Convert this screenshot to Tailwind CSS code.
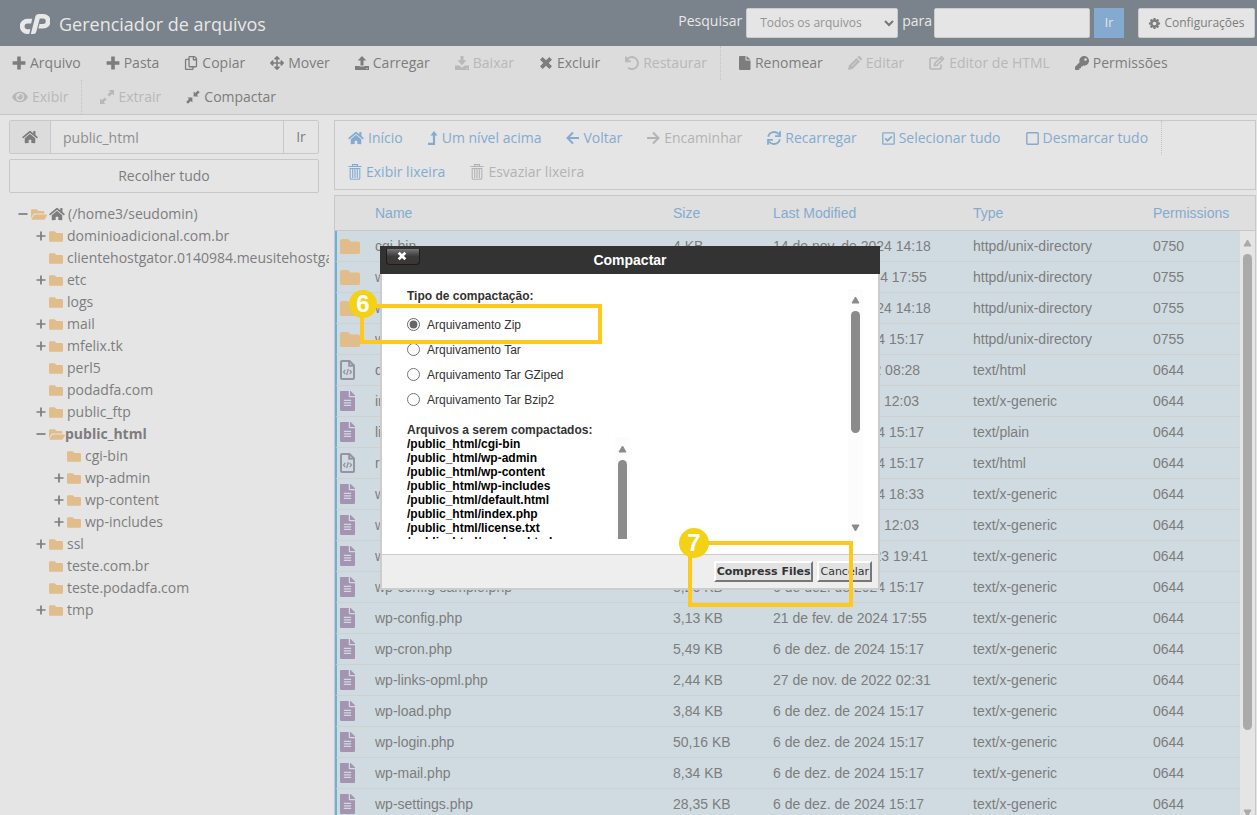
<!DOCTYPE html>
<html lang="pt-BR">
<head>
    <meta charset="UTF-8">
    <meta name="viewport" content="width=device-width, initial-scale=1.0">
    <title>Gerenciador de arquivos</title>
    <script src="https://cdn.jsdelivr.net/npm/@tailwindcss/browser@4"></script>
</head>
<body class="relative flex h-screen flex-col overflow-hidden bg-[#e5e5e5] font-['Open_Sans',sans-serif] text-sm text-[#7d7d7d]">

    <!-- Icon sprite -->
    <svg class="hidden" xmlns="http://www.w3.org/2000/svg">
        <symbol id="plus" viewBox="0 0 14 14"><path d="M5.2.6h3.6v4.6h4.6v3.6H8.800v4.600H5.200V8.800H.6V5.200h4.600z"/></symbol>
        <symbol id="copy" viewBox="0 0 448 512"><path d="M433.941 65.941l-51.882-51.882A48 48 0 0 0 348.118 0H176c-26.510 0-48 21.490-48 48v48H48c-26.510 0-48 21.490-48 48v320c0 26.510 21.490 48 48 48h224c26.510 0 48-21.490 48-48v-48h80c26.510 0 48-21.490 48-48V99.882a48 48 0 0 0-14.059-33.941zM266 464H54a6 6 0 0 1-6-6V150a6 6 0 0 1 6-6h74v224c0 26.510 21.490 48 48 48h96v42a6 6 0 0 1-6 6zm128-96H182a6 6 0 0 1-6-6V54a6 6 0 0 1 6-6h106v88c0 13.255 10.745 24 24 24h88v202a6 6 0 0 1-6 6zm6-256h-64V48h9.632c1.591 0 3.117.632 4.243 1.757l48.368 48.368a6 6 0 0 1 1.757 4.243V112z"/></symbol>
        <symbol id="move" viewBox="0 0 512 512"><path d="M352.201 425.775l-79.196 79.196c-9.373 9.373-24.568 9.373-33.941 0l-79.196-79.196c-15.119-15.119-4.411-40.971 16.971-40.970h51.162L228 284H127.196v51.162c0 21.382-25.851 32.090-40.971 16.971L7.029 272.937c-9.373-9.373-9.373-24.569 0-33.941L86.225 159.800c15.119-15.119 40.971-4.411 40.971 16.971V228H228V127.196h-51.230c-21.382 0-32.090-25.851-16.971-40.971l79.196-79.196c9.373-9.373 24.568-9.373 33.941 0l79.196 79.196c15.119 15.119 4.411 40.971-16.971 40.971h-51.162V228h100.804v-51.162c0-21.382 25.851-32.090 40.970-16.971l79.196 79.196c9.373 9.373 9.373 24.569 0 33.941L425.773 352.200c-15.119 15.119-40.971 4.411-40.970-16.971V284H284v100.804h51.230c21.382 0 32.090 25.851 16.971 40.971z"/></symbol>
        <symbol id="upload" viewBox="0 0 14 14"><path d="M7 0l4.300 4.600H8.500v4.900h-3V4.600H2.700zM0 10h4.600v.6h4.800V10H14v4H0zm11.300 2v1h1.200v-1z"/></symbol>
        <symbol id="download" viewBox="0 0 14 14"><path d="M5.500 0h3v4.300h2.900L7 9.200 2.600 4.300h2.900zM0 9.600h4.200L7 11.700l2.800-2.100H14V14H0zm11.300 2.400v1h1.200v-1z"/></symbol>
        <symbol id="times" viewBox="0 0 14 14"><path d="M3.700 1L7 4.300 10.300 1 13 3.700 9.700 7l3.300 3.300-2.700 2.700L7 9.700 3.700 13 1 10.300 4.300 7 1 3.700z"/></symbol>
        <symbol id="undo" viewBox="0 0 14 14"><path d="M1 .5v4.700h4.700M1.300 5A6 6 0 1 1 3 11.600" fill="none" stroke="currentColor" stroke-width="1.900"/></symbol>
        <symbol id="file" viewBox="0 0 12 14"><path d="M1 0h5.500v4.500h5V13a1 1 0 0 1-1 1H1a1 1 0 0 1-1-1V1a1 1 0 0 1 1-1zM7.500 0l4 3.600h-4z"/></symbol>
        <symbol id="pencil" viewBox="0 0 14 14"><path d="M.9 9.600l7.600-7.600 3.500 3.500-7.600 7.600L0 14zM9.400 1.100l.8-.8a1 1 0 0 1 1.500 0l2 2a1 1 0 0 1 0 1.500l-.8.8z"/><path d="M4 9.900l4.600-4.600" stroke="#dcdcdc" stroke-width=".8"/></symbol>
        <symbol id="edit" viewBox="0 0 16 14"><path d="M8.500 2H2.200A1.200 1.200 0 0 0 1 3.200v8.600A1.200 1.200 0 0 0 2.200 13h8.600a1.200 1.200 0 0 0 1.200-1.200V8.500M5.500 9.500l.4-2.400L12.600.8l1.900 1.900L8 9.200zM11 2.200l2 2" fill="none" stroke="currentColor" stroke-width="1.600"/></symbol>
        <symbol id="key" viewBox="0 0 512 512"><path d="M512 176.001C512 273.203 433.202 352 336 352c-11.220 0-22.190-1.062-32.827-3.069l-24.012 27.014A23.999 23.999 0 0 1 261.223 384H224v40c0 13.255-10.745 24-24 24h-40v40c0 13.255-10.745 24-24 24H24c-13.255 0-24-10.745-24-24v-78.059c0-6.365 2.529-12.470 7.029-16.971l161.802-161.802C163.108 213.814 160 195.271 160 176 160 78.798 238.797.001 335.999 0 433.488-.001 512 78.511 512 176.001zM336 128c0 26.510 21.490 48 48 48s48-21.490 48-48-21.490-48-48-48-48 21.490-48 48z"/></symbol>
        <symbol id="eye" viewBox="0 0 576 512"><path d="M572.520 241.400C518.290 135.590 410.930 64 288 64S57.680 135.640 3.480 241.410a32.350 32.350 0 0 0 0 29.190C57.710 376.410 165.070 448 288 448s230.320-71.640 284.520-177.410a32.350 32.350 0 0 0 0-29.190zM288 400a144 144 0 1 1 144-144 143.930 143.930 0 0 1-144 144zm0-240a95.310 95.310 0 0 0-25.180 3.790 47.850 47.850 0 0 1-66.900 66.900A95.780 95.780 0 1 0 288 160z"/></symbol>
        <symbol id="expand" viewBox="0 0 14 14"><path d="M8.500 0H14v5.500l-1.800-1.800-2.900 2.900-1.900-1.900 2.900-2.900zM5.500 14H0V8.500l1.800 1.800 2.900-2.900 1.900 1.900-2.900 2.900z"/></symbol>
        <symbol id="compress" viewBox="0 0 14 14"><path d="M7.600 1.500v4.900h4.900L11 4.900l2.700-2.700L11.900.4 9.200 3.100zM6.400 12.500V7.600H1.500L3 9.100.2 11.900 2 13.700 4.800 11z"/></symbol>
        <symbol id="home" viewBox="0 0 576 512"><path d="M280.370 148.260L96 300.110V464a16 16 0 0 0 16 16l112.060-.290a16 16 0 0 0 15.920-16V368a16 16 0 0 1 16-16h64a16 16 0 0 1 16 16v95.640a16 16 0 0 0 16 16.050L464 480a16 16 0 0 0 16-16V300L295.670 148.260a12.190 12.190 0 0 0-15.300 0zM571.600 251.470L488 182.560V44.050a12 12 0 0 0-12-12h-56a12 12 0 0 0-12 12v72.610L318.470 43a48 48 0 0 0-61 0L4.340 251.470a12 12 0 0 0-1.600 16.900l25.500 31A12 12 0 0 0 45.150 301l235.220-193.740a12.190 12.190 0 0 1 15.300 0L530.900 301a12 12 0 0 0 16.900-1.600l25.500-31a12 12 0 0 0-1.700-16.930z"/></symbol>
        <symbol id="level-up" viewBox="0 0 10 14"><path d="M0 12.800h6V4" fill="none" stroke="currentColor" stroke-width="2.200"/><path d="M6 0l3.600 4.600H2.400z"/></symbol>
        <symbol id="arrow-left" viewBox="0 0 13 14"><path d="M7 1.500L1.500 7 7 12.500M1.500 7H13" fill="none" stroke="currentColor" stroke-width="2"/></symbol>
        <symbol id="arrow-right" viewBox="0 0 13 14"><path d="M6 1.500L11.500 7 6 12.500M11.500 7H0" fill="none" stroke="currentColor" stroke-width="2"/></symbol>
        <symbol id="sync" viewBox="0 0 14 14"><path d="M1.200 5.800A6 6 0 0 1 12 3.600M13 .3v4.900H8.100M12.800 8.200A6 6 0 0 1 2 10.400M1 13.700V8.800h4.900" fill="none" stroke="currentColor" stroke-width="1.800"/></symbol>
        <symbol id="check-square" viewBox="0 0 13 13"><path d="M1.500.8h10a.7.7 0 0 1 .7.7v10a.7.7 0 0 1-.7.7h-10a.7.7 0 0 1-.7-.7v-10a.7.7 0 0 1 .7-.7z" fill="none" stroke="currentColor" stroke-width="1.300"/><path d="M3.200 6.400l2.300 2.300 4.400-4.400" fill="none" stroke="currentColor" stroke-width="1.700"/></symbol>
        <symbol id="square" viewBox="0 0 13 13"><path d="M1.500.8h10a.7.7 0 0 1 .7.7v10a.7.7 0 0 1-.7.7h-10a.7.7 0 0 1-.7-.7v-10a.7.7 0 0 1 .7-.7z" fill="none" stroke="currentColor" stroke-width="1.400"/></symbol>
        <symbol id="trash" viewBox="0 0 13 16"><path d="M0 2.500h13M4 2.500V.6h5v1.900M1.700 4.500v9.400q0 1.300 1.300 1.300h7q1.300 0 1.300-1.300V4.500zM4.200 5v9M6.500 5v9M8.800 5v9" fill="none" stroke="currentColor" stroke-width="1.100"/></symbol>
        <symbol id="cog" viewBox="0 0 1792 1792"><path d="M1152 896q0-106-75-181t-181-75-181 75-75 181 75 181 181 75 181-75 75-181zm512-109v222q0 12-8 23t-20 13l-185 28q-19 54-39 91 35 50 107 138 10 12 10 25t-9 23q-27 37-99 108t-94 71q-12 0-26-9l-138-108q-44 23-91 38-16 136-29 186-7 28-36 28h-222q-14 0-24.500-8.500t-11.500-21.500l-28-184q-49-16-90-37l-141 107q-10 9-25 9-14 0-25-11-126-114-165-168-7-10-7-23 0-12 8-23 15-21 51-66.500t54-70.500q-27-50-41-99l-183-27q-13-2-21-12.500t-8-23.500v-222q0-12 8-23t19-13l186-28q14-46 39-92-40-57-107-138-10-12-10-24 0-10 9-23 26-36 98.500-107.500t94.500-71.500q13 0 26 10l138 107q44-23 91-38 16-136 29-186 7-28 36-28h222q14 0 24.500 8.500t11.500 21.500l28 184q49 16 90 37l142-107q9-9 24-9 13 0 25 10 129 119 165 170 7 8 7 22 0 12-8 23-15 21-51 66.500t-54 70.500q26 50 41 98l183 28q13 2 21 12.500t8 23.500z"/></symbol>
        <symbol id="folder" viewBox="0 64 512 384"><path d="M464 128H272l-64-64H48C21.490 64 0 85.490 0 112v288c0 26.510 21.490 48 48 48h416c26.510 0 48-21.490 48-48V176c0-26.510-21.490-48-48-48z"/></symbol>
        <symbol id="folder-open" viewBox="0 64 576 384"><path d="M572.694 292.093L500.270 416.248A63.997 63.997 0 0 1 444.989 448H45.025c-18.523 0-30.064-20.093-20.731-36.093l72.424-124.155A64 64 0 0 1 152 256h399.964c18.523 0 30.064 20.093 20.730 36.093zM152 224h328v-48c0-26.510-21.490-48-48-48H272l-64-64H48C21.490 64 0 85.490 0 112v278.046l69.077-118.418C86.214 242.250 117.989 224 152 224z"/></symbol>
        <symbol id="file-text" viewBox="0 0 384 512"><path d="M224 136V0H24C10.700 0 0 10.700 0 24v464c0 13.300 10.700 24 24 24h336c13.300 0 24-10.700 24-24V160H248c-13.200 0-24-10.800-24-24zm64 236c0 6.600-5.400 12-12 12H108c-6.600 0-12-5.400-12-12v-8c0-6.600 5.400-12 12-12h168c6.600 0 12 5.400 12 12v8zm0-64c0 6.600-5.400 12-12 12H108c-6.600 0-12-5.400-12-12v-8c0-6.600 5.400-12 12-12h168c6.600 0 12 5.400 12 12v8zm0-72v8c0 6.600-5.400 12-12 12H108c-6.600 0-12-5.400-12-12v-8c0-6.600 5.400-12 12-12h168c6.600 0 12 5.400 12 12zm96-114.100v6.100H256V0h6.100c6.400 0 12.500 2.500 17 7l97.900 98c4.500 4.500 7 10.600 7 16.900z"/></symbol>
        <symbol id="file-code" viewBox="0 0 15 20"><path d="M2 1h7.500L14 5.500V18a1 1 0 0 1-1 1H2a1 1 0 0 1-1-1V2a1 1 0 0 1 1-1zM9.200 1v4.800H14" fill="none" stroke="currentColor" stroke-width="2"/><path d="M5.300 9.800L3.500 12l1.800 2.200M9.700 9.800l1.800 2.200-1.800 2.200M8.300 9l-1.600 6" fill="none" stroke="currentColor" stroke-width="1.300"/></symbol>
        <symbol id="toggle-plus" viewBox="0 0 10 10"><path d="M5 .5v9M.5 5h9" fill="none" stroke="currentColor" stroke-width="1.700"/></symbol>
        <symbol id="toggle-minus" viewBox="0 0 10 10"><path d="M.5 5h9" fill="none" stroke="currentColor" stroke-width="1.700"/></symbol>
        <symbol id="chevron" viewBox="0 0 10 7"><path d="M1 1l4 4 4-4" fill="none" stroke="currentColor" stroke-width="2"/></symbol>
        <symbol id="triangle" viewBox="0 0 9 8"><path d="M4.500 1L8 7H1z" stroke="currentColor" stroke-linejoin="round"/></symbol>
    </svg>

    <!-- Header -->
    <header class="flex h-[46px] shrink-0 items-center bg-[#7a828b] pr-[2px] pl-5 text-[#e8e8e8]">
        <svg class="mt-0.5 h-5 w-[30px]" viewBox="0 0 30 20" fill="currentColor" role="img" aria-label="cPanel">
            <path d="M12.300 4.800L11.100 9.400H7.500a2.900 2.900 0 0 0 0 5.900H10.400L9.200 19.900H7.300A7.550 7.550 0 0 1 7.300 4.800z"/>
            <path d="M10.800 19.900L15.300 2.800Q16.100 0 19 0H23.400A7.100 7.100 0 0 1 23.400 14.500H18.300L19.500 10H23a2.750 2.750 0 0 0 0-5.500H19.800L16.200 18Q15.600 19.900 13.600 19.900z"/>
        </svg>
        <h1 class="ml-[9px] pt-[2px] text-lg">Gerenciador de arquivos</h1>
        <form class="ml-auto flex items-center" onsubmit="return false">
            <label for="scope" class="-mt-1 mr-1 font-medium">Pesquisar</label>
            <div class="relative">
                <select id="scope" class="h-[30px] w-[152px] appearance-none rounded-xs border border-[#ccc] bg-[#e5e5e5] pl-[13px] text-xs text-[#949494]">
                    <option>Todos os arquivos</option>
                </select>
                <svg class="pointer-events-none absolute top-3 right-1 h-[7px] w-2.5 text-[#777]"><use href="#chevron"/></svg>
            </div>
            <label for="query" class="-mt-1 mr-0.5 ml-1 font-medium">para</label>
            <input id="query" type="text" class="h-[30px] w-[156px] rounded-xs border border-[#ccc] bg-[#e5e5e5] px-3">
            <button class="ml-1 h-[30px] w-[30px] bg-[#84abcf] text-xs">Ir</button>
            <button type="button" class="ml-3.5 flex h-[30px] w-[117px] items-center justify-center gap-[3px] rounded-xs border border-[#ccc] bg-[#e5e5e5] text-xs text-[#7d7d7d]"><svg class="size-[13px] fill-current"><use href="#cog"/></svg>Configurações</button>
        </form>
    </header>

    <!-- Main toolbar -->
    <nav class="flex shrink-0 flex-wrap border-b border-[#c6c6c6] bg-[#dcdcdc]" aria-label="Ferramentas">
        <button class="flex h-[34px] items-center gap-1 pr-[13px] pl-3"><svg class="size-3.5 fill-current"><use href="#plus"/></svg>Arquivo</button>
        <button class="flex h-[34px] items-center gap-1 pr-[13px] pl-3"><svg class="size-3.5 fill-current"><use href="#plus"/></svg>Pasta</button>
        <button class="flex h-[34px] items-center gap-1 pr-[13px] pl-3"><svg class="size-3.5 fill-current"><use href="#copy"/></svg>Copiar</button>
        <button class="flex h-[34px] items-center gap-1 pr-[13px] pl-3"><svg class="size-3.5 fill-current"><use href="#move"/></svg>Mover</button>
        <button class="flex h-[34px] items-center gap-1 pr-[13px] pl-3"><svg class="size-3.5 fill-current"><use href="#upload"/></svg>Carregar</button>
        <button disabled class="flex h-[34px] items-center gap-1 pr-[13px] pl-3 text-[#b8b8b8]"><svg class="size-3.5 fill-current"><use href="#download"/></svg>Baixar</button>
        <button class="flex h-[34px] items-center gap-1 pr-[13px] pl-3"><svg class="size-3.5 fill-current"><use href="#times"/></svg>Excluir</button>
        <button disabled class="mr-1.5 flex h-[34px] items-center gap-1 border-r border-dotted border-[#c4c4c4] pr-[13px] pl-3 text-[#b8b8b8]"><svg class="size-3.5 fill-current"><use href="#undo"/></svg>Restaurar</button>
        <button class="flex h-[34px] items-center gap-1 pr-[13px] pl-3"><svg class="h-3.5 w-3 fill-current"><use href="#file"/></svg>Renomear</button>
        <button disabled class="flex h-[34px] items-center gap-1 pr-[13px] pl-3 text-[#b8b8b8]"><svg class="size-3.5 fill-current"><use href="#pencil"/></svg>Editar</button>
        <button disabled class="flex h-[34px] items-center gap-1 pr-[13px] pl-3 text-[#b8b8b8]"><svg class="h-3.5 w-4 fill-current"><use href="#edit"/></svg>Editor de HTML</button>
        <button class="flex h-[34px] items-center gap-1 pr-[13px] pl-3"><svg class="size-3.5 fill-current"><use href="#key"/></svg>Permissões</button>
        <button disabled class="mr-1.5 flex h-[34px] items-center gap-1 border-r border-dotted border-[#c4c4c4] pr-[13px] pl-3 text-[#b8b8b8]"><svg class="h-3.5 w-4 fill-current"><use href="#eye"/></svg>Exibir</button>
        <button disabled class="flex h-[34px] items-center gap-1 pr-[13px] pl-3 text-[#b8b8b8]"><svg class="size-3.5 fill-current"><use href="#expand"/></svg>Extrair</button>
        <button class="flex h-[34px] items-center gap-1 pr-[13px] pl-3"><svg class="size-3.5 fill-current"><use href="#compress"/></svg>Compactar</button>
    </nav>

    <div class="flex min-h-0 flex-1 gap-[5px] pt-[5px] pr-px">
        <!-- Folder tree -->
        <aside class="w-[329px] shrink-0 overflow-hidden pl-[9px]">
            <div class="mr-2.5">
                <form class="flex h-[34px] overflow-hidden rounded-xs border border-[#c8c8c8]" onsubmit="return false">
                    <button type="button" aria-label="Início" class="flex w-[41px] items-center justify-center border-r border-[#c8c8c8] bg-[#dcdcdc]"><svg class="h-3.5 w-4 fill-current"><use href="#home"/></svg></button>
                    <input type="text" aria-label="Caminho" value="public_html" class="min-w-0 flex-1 px-3 pt-0.5 text-[#8e8e8e]">
                    <button class="w-[35px] border-l border-[#c8c8c8]">Ir</button>
                </form>
                <button class="mt-[5px] h-[34px] w-full rounded-xs border border-[#c8c8c8]">Recolher tudo</button>
            </div>
            <ul id="tree" class="mt-2.5 pl-[9px]"></ul>
        </aside>

        <main class="flex min-w-0 flex-1 flex-col gap-[5px]">
            <nav class="flex shrink-0 flex-wrap border border-[#c8c8c8] pl-px text-[#84abcf]" aria-label="Navegação">
                <a href="#" class="flex h-[34px] items-center gap-1 pr-[13px] pl-3"><svg class="h-3.5 w-4 fill-current"><use href="#home"/></svg>Início</a>
                <a href="#" class="flex h-[34px] items-center gap-1 pr-[13px] pl-3"><svg class="h-3.5 w-2.5 fill-current"><use href="#level-up"/></svg>Um nível acima</a>
                <a href="#" class="flex h-[34px] items-center gap-1 pr-[13px] pl-3"><svg class="h-3.5 w-[13px]"><use href="#arrow-left"/></svg>Voltar</a>
                <a href="#" class="flex h-[34px] items-center gap-1 pr-[13px] pl-3 text-[#b3b3b3]"><svg class="h-3.5 w-[13px]"><use href="#arrow-right"/></svg>Encaminhar</a>
                <a href="#" class="flex h-[34px] items-center gap-1 pr-[13px] pl-3"><svg class="size-3.5"><use href="#sync"/></svg>Recarregar</a>
                <a href="#" class="flex h-[34px] items-center gap-1 pr-[13px] pl-3"><svg class="size-[13px]"><use href="#check-square"/></svg>Selecionar tudo</a>
                <a href="#" class="flex h-[34px] items-center gap-1 border-r border-dotted border-[#c4c4c4] pr-[13px] pl-3"><svg class="size-[13px]"><use href="#square"/></svg>Desmarcar tudo</a>
                <a href="#" class="flex h-[34px] items-center gap-1 pr-[13px] pl-3"><svg class="h-4 w-3.5"><use href="#trash"/></svg>Exibir lixeira</a>
                <a href="#" class="flex h-[34px] items-center gap-1 pr-[13px] pl-3 text-[#b3b3b3]"><svg class="h-4 w-3.5"><use href="#trash"/></svg>Esvaziar lixeira</a>
            </nav>

            <div class="relative min-h-0 flex-1 overflow-hidden border border-b-0 border-[#c8c8c8]">
                <table class="w-full table-fixed border-separate border-spacing-0 font-['Liberation_Sans',sans-serif]">
                    <thead>
                        <tr class="h-[35px] bg-[#dfdfdf] text-left text-[#84abcf]">
                            <th class="w-[35px] border-b border-[#c8c8c8]"></th>
                            <th class="border-b border-[#c8c8c8] pl-[5px] font-normal">Name</th>
                            <th class="w-[100px] border-b border-[#c8c8c8] pl-[5px] font-normal">Size</th>
                            <th class="w-[200px] border-b border-[#c8c8c8] pl-[5px] font-normal">Last Modified</th>
                            <th class="w-[180px] border-b border-[#c8c8c8] pl-[5px] font-normal">Type</th>
                            <th class="w-[107px] border-b border-[#c8c8c8] pl-[5px] font-normal">Permissions</th>
                        </tr>
                    </thead>
                    <tbody id="files"></tbody>
                </table>
                <div class="absolute top-[35px] right-0 bottom-0 flex w-[15px] flex-col items-center bg-[#e5e5e5] pt-2 text-[#aaa]">
                    <svg class="h-2 w-[9px] shrink-0 fill-current"><use href="#triangle"/></svg>
                    <div class="mt-[7px] h-[476px] w-[9px] shrink-0 rounded-full bg-[#aaa]"></div>
                    <svg class="mt-auto -mb-0.5 h-2 w-[9px] shrink-0 rotate-180 fill-current"><use href="#triangle"/></svg>
                </div>
            </div>
        </main>
    </div>

    <!-- Compress dialog -->
    <div role="dialog" aria-labelledby="dialogTitle" class="absolute top-[246px] left-[380px] w-[500px] font-['Liberation_Sans',sans-serif] text-xs text-[#333]">
        <div class="relative flex h-7 items-center justify-center bg-[#333] text-white">
            <button aria-label="Fechar" class="absolute top-[3px] left-[6px] flex h-4 w-[34px] items-center justify-center rounded-b-sm border border-t-0 border-[#1c1c1c] bg-linear-to-b from-[#777] via-[#3a3a3a] to-[#3d3533] pr-0.5 pb-0.5"><svg class="size-2.5 fill-current"><use href="#times"/></svg></button>
            <h2 id="dialogTitle" class="text-sm font-bold">Compactar</h2>
        </div>
        <div class="border-2 border-t-0 border-[#ccc] bg-white">
            <div class="flex h-[280px] justify-between py-[15px] pr-[15px] pl-[25px]">
                <form id="compressForm" class="flex w-[223px] flex-col overflow-hidden">
                    <fieldset>
                        <legend class="h-[23px] leading-[14px] font-bold">Tipo de compactação:</legend>
                        <label class="flex h-[25px] items-center gap-[7px]"><input type="radio" name="type" checked class="size-[13px] accent-[#666]">Arquivamento Zip</label>
                        <label class="flex h-[25px] items-center gap-[7px]"><input type="radio" name="type" class="size-[13px] accent-[#666]">Arquivamento Tar</label>
                        <label class="flex h-[25px] items-center gap-[7px]"><input type="radio" name="type" class="size-[13px] accent-[#666]">Arquivamento Tar GZiped</label>
                        <label class="flex h-[25px] items-center gap-[7px]"><input type="radio" name="type" class="size-[13px] accent-[#666]">Arquivamento Tar Bzip2</label>
                    </fieldset>
                    <p class="mt-[11px] h-3.5 shrink-0 leading-[14px] font-bold">Arquivos a serem compactados:</p>
                    <div class="flex min-h-0 flex-1 justify-between overflow-hidden">
                        <ul id="targets" class="leading-[14px] font-bold text-black"></ul>
                        <div class="flex w-[15px] flex-col items-center bg-[#fcfcfc] pt-2 text-[#8b8b8b]">
                            <svg class="h-2 w-[9px] shrink-0 fill-current"><use href="#triangle"/></svg>
                            <div class="mt-[7px] h-32 w-[9px] shrink-0 rounded-full bg-[#8b8b8b]"></div>
                        </div>
                    </div>
                </form>
                <div class="flex w-[15px] flex-col items-center bg-[#fcfcfc] py-[7px] text-[#8b8b8b]">
                    <svg class="h-2 w-[9px] fill-current"><use href="#triangle"/></svg>
                    <div class="mt-[7px] h-[122px] w-[9px] rounded-full bg-[#8b8b8b]"></div>
                    <svg class="mt-auto h-2 w-[9px] rotate-180 fill-current"><use href="#triangle"/></svg>
                </div>
            </div>
            <div class="flex h-[34px] items-center justify-end gap-1 border-t border-[#ccc] bg-[#eee] pr-1.5 font-['DejaVu_Sans',sans-serif] text-[11px]">
                <button class="h-[21px] border-2 border-t-white border-r-[#777] border-b-[#777] border-l-white bg-[#e2e2e2] px-px leading-none font-bold">Compress Files</button>
                <button class="h-[21px] border-2 border-t-white border-r-[#777] border-b-[#777] border-l-white bg-[#e2e2e2] px-px leading-none">Cancelar</button>
            </div>
        </div>
    </div>

    <!-- Tutorial step markers -->
    <div class="pointer-events-none absolute top-[304px] left-[360px] h-10 w-[242px] border-4 border-[#ffc91b]">
        <span class="absolute -top-[18px] -left-[15px] flex size-7 items-center justify-center rounded-full bg-[#f2d116] font-['Liberation_Sans',sans-serif] text-2xl font-bold text-white">6</span>
    </div>
    <div class="pointer-events-none absolute top-[541px] left-[688px] h-[66px] w-[165px] border-4 border-[#ffc91b]">
        <span class="absolute -top-[17px] -left-[13px] flex size-[30px] items-center justify-center rounded-full bg-[#f2d116] font-['Liberation_Sans',sans-serif] text-2xl font-bold text-white">7</span>
    </div>

    <script>
        // name, toggle ('+', '-' or ''), children
        const tree = [
            ['(/home3/seudomin)', '-', [
                ['dominioadicional.com.br', '+'],
                ['clientehostgator.0140984.meusitehostgator.com.br', ''],
                ['etc', '+'],
                ['logs', ''],
                ['mail', '+'],
                ['mfelix.tk', '+'],
                ['perl5', ''],
                ['podadfa.com', ''],
                ['public_ftp', '+'],
                ['public_html', '-', [
                    ['cgi-bin', ''],
                    ['wp-admin', '+'],
                    ['wp-content', '+'],
                    ['wp-includes', '+'],
                ]],
                ['ssl', '+'],
                ['teste.com.br', ''],
                ['teste.podadfa.com', ''],
                ['tmp', '+'],
            ]],
        ];

        function renderNode([name, toggle, children], isRoot) {
            const toggleIcon = toggle === '+' ? '<svg class="size-2.5"><use href="#toggle-plus"/></svg>'
                : toggle === '-' ? '<svg class="size-2.5"><use href="#toggle-minus"/></svg>' : '';
            const folder = children
                ? '<svg class="h-[11px] w-4 shrink-0 fill-[#e0bd8a]"><use href="#folder-open"/></svg>'
                : '<svg class="h-[11px] w-3.5 shrink-0 fill-[#e0bd8a]"><use href="#folder"/></svg>';
            const home = isRoot ? '<svg class="mx-[2px] h-3.5 w-4 shrink-0 fill-current"><use href="#home"/></svg>' : '';
            const label = children && !isRoot ? 'font-bold' : isRoot ? 'pl-px' : 'pl-1';
            return `<li>
                <div class="flex h-[22px] items-center whitespace-nowrap">
                    <span class="flex w-[13px] shrink-0">${toggleIcon}</span>${folder}${home}<a href="#" class="${label}">${name}</a>
                </div>
                ${children ? `<ul class="pl-[18px]">${children.map(c => renderNode(c, false)).join('')}</ul>` : ''}
            </li>`;
        }
        document.getElementById('tree').innerHTML = tree.map(n => renderNode(n, true)).join('');

        const files = [
            ['folder', 'cgi-bin', '4 KB', '14 de nov. de 2024 14:18', 'httpd/unix-directory', '0750'],
            ['folder', 'wp-admin', '4 KB', '21 de fev. de 2024 17:55', 'httpd/unix-directory', '0755'],
            ['folder', 'wp-content', '4 KB', '14 de nov. de 2024 14:18', 'httpd/unix-directory', '0755'],
            ['folder', 'wp-includes', '12 KB', '6 de dez. de 2024 15:17', 'httpd/unix-directory', '0755'],
            ['code', 'default.html', '8,56 KB', '6 de set. de 2022 08:28', 'text/html', '0644'],
            ['text', 'index.php', '405 bytes', '6 de fev. de 2020 12:03', 'text/x-generic', '0644'],
            ['text', 'license.txt', '19,45 KB', '6 de dez. de 2024 15:17', 'text/plain', '0644'],
            ['code', 'readme.html', '7,24 KB', '6 de dez. de 2024 15:17', 'text/html', '0644'],
            ['text', 'wp-activate.php', '7,21 KB', '6 de dez. de 2024 18:33', 'text/x-generic', '0644'],
            ['text', 'wp-blog-header.php', '351 bytes', '6 de fev. de 2020 12:03', 'text/x-generic', '0644'],
            ['text', 'wp-comments-post.php', '2,27 KB', '14 de jun. de 2023 19:41', 'text/x-generic', '0644'],
            ['text', 'wp-config-sample.php', '3,26 KB', '6 de dez. de 2024 15:17', 'text/x-generic', '0644'],
            ['text', 'wp-config.php', '3,13 KB', '21 de fev. de 2024 17:55', 'text/x-generic', '0644'],
            ['text', 'wp-cron.php', '5,49 KB', '6 de dez. de 2024 15:17', 'text/x-generic', '0644'],
            ['text', 'wp-links-opml.php', '2,44 KB', '27 de nov. de 2022 02:31', 'text/x-generic', '0644'],
            ['text', 'wp-load.php', '3,84 KB', '6 de dez. de 2024 15:17', 'text/x-generic', '0644'],
            ['text', 'wp-login.php', '50,16 KB', '6 de dez. de 2024 15:17', 'text/x-generic', '0644'],
            ['text', 'wp-mail.php', '8,34 KB', '6 de dez. de 2024 15:17', 'text/x-generic', '0644'],
            ['text', 'wp-settings.php', '28,35 KB', '6 de dez. de 2024 15:17', 'text/x-generic', '0644'],
        ];
        const fileIcons = {
            folder: '<svg class="h-[15px] w-5 fill-[#e0bd8a]"><use href="#folder"/></svg>',
            code: '<svg class="h-5 w-[15px] fill-current text-[#9494a2]"><use href="#file-code"/></svg>',
            text: '<svg class="h-5 w-[15px] fill-[#a494b2]"><use href="#file-text"/></svg>',
        };
        document.getElementById('files').innerHTML = files.map(([icon, ...cells]) => `
            <tr class="h-[31px] bg-[#d0dbe1]">
                <td class="border-b border-l-2 border-b-[#cfd0d0] border-l-[#6cb2d4] pl-[3px]">${fileIcons[icon]}</td>
                ${cells.map(c => `<td class="border-b border-[#cfd0d0] pl-[5px] whitespace-nowrap">${c}</td>`).join('')}
            </tr>`).join('');

        document.getElementById('targets').innerHTML = files
            .map(f => `<li>/public_html/${f[1]}</li>`).join('');
    </script>
</body>
</html>
